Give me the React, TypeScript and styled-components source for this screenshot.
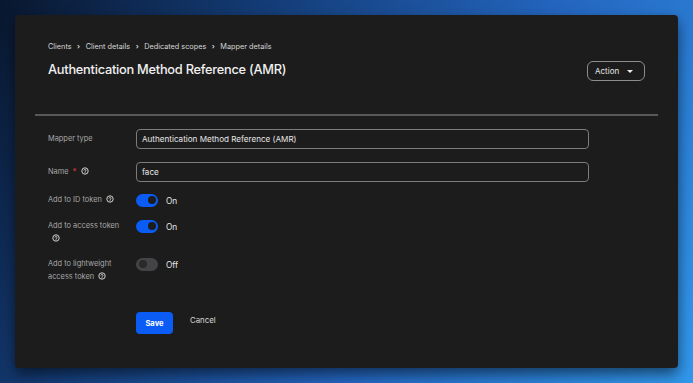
import React from "react";
import styled, { createGlobalStyle } from "styled-components";

const Global = createGlobalStyle`
  html, body { margin: 0; padding: 0; }
  body {
    width: 693px;
    height: 383px;
    overflow: hidden;
    font-family: "Inter", "Noto Sans", sans-serif;
    background: linear-gradient(120deg, #09172e 0%, #143d78 30%, #2466c0 62%, #3298ec 100%);
  }
`;

const Page = styled.div`
  padding: 15px;
  box-sizing: border-box;
  width: 693px;
  height: 383px;
`;

const Card = styled.div`
  width: 663px;
  height: 353px;
  background: #1c1c1c;
  border-radius: 4px;
  box-shadow: 0 6px 14px rgba(0, 0, 0, 0.55);
  box-sizing: border-box;
  padding: 25px 20px 0 20px;
  display: flex;
  flex-direction: column;
`;

const Header = styled.div`
  padding: 0 13px;
  display: flex;
  justify-content: space-between;
  align-items: flex-start;
  height: 74px;
`;

const HeaderLeft = styled.div`
  display: flex;
  flex-direction: column;
`;

const Breadcrumb = styled.nav`
  display: flex;
  align-items: center;
  gap: 5.5px;
  font-size: 7.3px;
  color: #d6d6d6;
  height: 12px;
`;

const Crumb = styled.span``;

const Sep = styled.span`
  font-size: 7px;
  color: #d6d6d6;
  font-weight: 700;
`;

const Title = styled.h1`
  margin: 10px 0 0 0;
  font-size: 12.8px;
  font-weight: 500;
  color: #f0f0f0;
  letter-spacing: -0.25px;
`;

const ActionButton = styled.button`
  margin-top: 21px;
  width: 58px;
  height: 20px;
  border: 1px solid #8d8d8d;
  border-radius: 6px;
  background: transparent;
  color: #e8e8e8;
  font-family: inherit;
  font-size: 8px;
  display: flex;
  align-items: center;
  justify-content: space-between;
  padding: 0 11px 0 7px;
  box-sizing: border-box;
`;

const Caret = styled.span`
  width: 0;
  height: 0;
  border-left: 3px solid transparent;
  border-right: 3px solid transparent;
  border-top: 3.5px solid #eee;
`;

const Divider = styled.hr`
  margin: 0;
  border: none;
  height: 1.5px;
  background: #585858;
`;

const Form = styled.div`
  padding: 13px 13px 0 13px;
  display: flex;
  flex-direction: column;
`;

const Row = styled.div<{ $mb: number; $align?: string }>`
  display: flex;
  align-items: ${(p) => p.$align || "center"};
  margin-bottom: ${(p) => p.$mb}px;
`;

const Label = styled.div`
  width: 88px;
  flex-shrink: 0;
  box-sizing: border-box;
  padding-right: 12px;
  font-size: 7.4px;
  line-height: 13px;
  color: #a8a8a8;
`;

const Required = styled.span`
  color: #e0353a;
  margin-left: 4px;
  font-size: 8px;
`;

const HelpIcon = () => (
  <svg
    width="8"
    height="8"
    viewBox="0 0 16 16"
    style={{ verticalAlign: "-1px", marginLeft: "4px" }}
  >
    <circle cx="8" cy="8" r="6.4" fill="none" stroke="#d0d0d0" strokeWidth="2" />
    <path
      d="M5.9 6.3a2.1 2.1 0 0 1 4.1.5c0 1.4-2 1.7-2 2.9"
      fill="none"
      stroke="#d0d0d0"
      strokeWidth="1.8"
      strokeLinecap="round"
    />
    <circle cx="8" cy="11.6" r="1" fill="#d0d0d0" />
  </svg>
);

const Input = styled.div`
  width: 453px;
  height: 20px;
  box-sizing: border-box;
  border: 1px solid #7c7c7c;
  border-radius: 4px;
  display: flex;
  align-items: center;
  padding: 0 5px;
  font-size: 8.1px;
  color: #e6e6e6;
`;

const SwitchWrap = styled.div`
  display: flex;
  align-items: center;
  gap: 8px;
  padding-top: 1px;
`;

const Track = styled.div<{ $on: boolean }>`
  width: 22px;
  height: 13px;
  border-radius: 7px;
  background: ${(p) => (p.$on ? "#0a5cf5" : "#444446")};
  display: flex;
  align-items: center;
  justify-content: ${(p) => (p.$on ? "flex-end" : "flex-start")};
  padding: 0 2.5px;
  box-sizing: border-box;
`;

const Knob = styled.div<{ $on: boolean }>`
  width: 8px;
  height: 8px;
  border-radius: 50%;
  background: ${(p) => (p.$on ? "#1c1c1c" : "#2a2a2a")};
`;

const SwitchText = styled.span`
  font-size: 8.3px;
  color: #e6e6e6;
  padding-top: 1px;
`;

const Switch = ({ on }: { on: boolean }) => (
  <SwitchWrap>
    <Track $on={on}>
      <Knob $on={on} />
    </Track>
    <SwitchText>{on ? "On" : "Off"}</SwitchText>
  </SwitchWrap>
);

const Actions = styled.div`
  display: flex;
  align-items: center;
  gap: 17px;
  padding-left: 88px;
`;

const SaveButton = styled.button`
  width: 37px;
  height: 22px;
  border: none;
  border-radius: 4px;
  background: #0a5cf5;
  color: #fff;
  font-family: inherit;
  font-weight: 700;
  font-size: 7.6px;
  padding: 0;
  padding-top: 2px;
`;

const CancelButton = styled.button`
  border: none;
  background: transparent;
  color: #d8d8d8;
  font-family: inherit;
  font-size: 7.8px;
  padding: 0;
  margin-top: -5px;
`;

export default function App() {
  return (
    <>
      <Global />
      <Page>
        <Card>
          <Header>
            <HeaderLeft>
              <Breadcrumb>
                <Crumb>Clients</Crumb>
                <Sep>›</Sep>
                <Crumb>Client details</Crumb>
                <Sep>›</Sep>
                <Crumb>Dedicated scopes</Crumb>
                <Sep>›</Sep>
                <Crumb>Mapper details</Crumb>
              </Breadcrumb>
              <Title>Authentication Method Reference (AMR)</Title>
            </HeaderLeft>
            <ActionButton>
              Action
              <Caret />
            </ActionButton>
          </Header>
          <Divider />
          <Form>
            <Row $mb={13}>
              <Label>Mapper type</Label>
              <Input>Authentication Method Reference (AMR)</Input>
            </Row>
            <Row $mb={11}>
              <Label>
                Name<Required>*</Required>
                <HelpIcon />
              </Label>
              <Input>face</Input>
            </Row>
            <Row $mb={12} $align="flex-start">
              <Label>
                Add to ID token
                <HelpIcon />
              </Label>
              <Switch on={true} />
            </Row>
            <Row $mb={12} $align="flex-start">
              <Label>
                Add to access token
                <HelpIcon />
              </Label>
              <Switch on={true} />
            </Row>
            <Row $mb={29} $align="flex-start">
              <Label>
                Add to lightweight access token
                <HelpIcon />
              </Label>
              <Switch on={false} />
            </Row>
            <Actions>
              <SaveButton>Save</SaveButton>
              <CancelButton>Cancel</CancelButton>
            </Actions>
          </Form>
        </Card>
      </Page>
    </>
  );
}
